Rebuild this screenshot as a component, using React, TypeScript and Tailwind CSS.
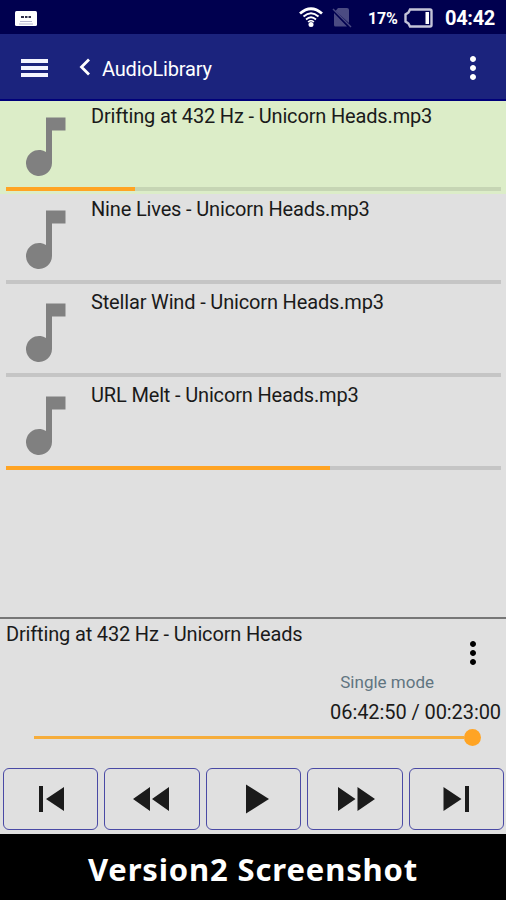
import { MdMoreVert } from "react-icons/md";

const tracks = [
    { name: "Drifting at 432 Hz - Unicorn Heads.mp3", progress: 26, active: true },
    { name: "Nine Lives - Unicorn Heads.mp3", progress: 0, active: false },
    { name: "Stellar Wind - Unicorn Heads.mp3", progress: 0, active: false },
    { name: "URL Melt - Unicorn Heads.mp3", progress: 65.4, active: false },
];

const controls = [
    { name: "Previous", path: "M36 18h4v26h-4zM61 19v24L43 31z" },
    { name: "Rewind", path: "M46 19v24L29 31zM65 19v24L48 31z" },
    { name: "Play", path: "M40 16.500v29L63 31z" },
    { name: "Fast forward", path: "M31 19v24L48.500 31zM50.500 19v24L68 31z" },
    { name: "Next", path: "M35.500 19v24L53.500 31zM57 18h4v26h-4z" },
];

function StatusBar() {
    return (
        <div className="h-[34px] shrink-0 bg-[#00004f] flex items-center text-white">
            <svg className="ml-[15px] mt-[2px] w-[22px] h-[15px]" viewBox="0 0 22 15">
                <rect width="22" height="15" rx="1.500" fill="#fff" />
                <path d="M6 5h3v2H6zM10 5h2.500v2H10zM13.500 5h2.500v2h-2.500z" fill="#30304a" />
                <path d="M5 10.500h12M4 13h14" stroke="#b8b8d0" strokeWidth="1" />
            </svg>
            <svg className="ml-[262px] w-[24px] h-[22px]" viewBox="0 0 24 22" fill="none" stroke="#fff">
                <path d="M1 7.500Q12-2 23 7.500" strokeWidth="2.800" />
                <path d="M4.500 10.500Q12 4 19.500 10.500" strokeWidth="2" />
                <path d="M7 13.500Q12 9 17 13.500" strokeWidth="1.800" />
                <path d="M9 16Q12 13.500 15 16" strokeWidth="1.500" />
                <circle cx="12" cy="18.500" r="2.500" fill="#fff" stroke="none" />
            </svg>
            <svg className="ml-[9px] mt-[2px] w-[21px] h-[20px]" viewBox="0 0 21 20">
                <path d="M6 0h9q2 0 2 2v13L3.500 3zM2 5l13 13.500H3.500Q2 18.500 2 17z" fill="#4b4b82" />
                <path d="M1 1l18 18" stroke="#4b4b82" strokeWidth="1.500" />
            </svg>
            <span className="ml-[15px] w-[32px] text-[16px] leading-none font-bold tracking-[-0.2px] pt-[3px]">17%</span>
            <svg className="ml-[4px] mt-px w-[29px] h-[20px]" viewBox="0 0 29 20">
                <path d="M6 1.500h20q1.500 0 1.500 1.500v14q0 1.500-1.500 1.500H6L4.500 15.500 1.500 13.500V6.500L4.500 4.500z" fill="none" stroke="#c4c4d8" strokeWidth="2.400" />
                <path d="M21.500 4h3.500v12h-3.500z" fill="#fff" />
            </svg>
            <span className="ml-[12px] text-[20px] leading-none font-bold tracking-[-0.3px] pt-[2px]">04:42</span>
        </div>
    );
}

function Header() {
    return (
        <header className="h-[67px] shrink-0 bg-[#1b237d] border-b-2 border-[#00007a] flex items-center text-white">
            <button aria-label="Menu" className="ml-[21px] mt-[3px] w-[27px] flex flex-col gap-[3px]">
                <span className="h-[4px] bg-[#f4f4ff]" />
                <span className="h-[4px] bg-[#f4f4ff]" />
                <span className="h-[4px] bg-[#f4f4ff]" />
            </button>
            <svg className="ml-[31px] mt-px w-[12px] h-[18px]" viewBox="0 0 12 18">
                <path d="M10 1.500L2.500 9l7.500 7.500" fill="none" stroke="#fff" strokeWidth="2.800" />
            </svg>
            <h1 className="ml-[11px] mt-[4px] text-[20px] leading-6 tracking-[-0.2px]">AudioLibrary</h1>
            <MdMoreVert className="ml-auto mr-[15px] mt-[2px] w-[36px] h-[36px]" />
        </header>
    );
}

function TrackRow({ name, progress, active }: (typeof tracks)[number]) {
    return (
        <li className={active ? "h-[93px] bg-[#dcedc8] flex flex-col" : "h-[93px] flex flex-col"}>
            <div className="flex h-[86px]">
                <svg className="ml-[26px] mt-[16px] w-[40px] h-[60px]" viewBox="0 0 40 60" fill="#808080">
                    <path d="M20 .5h19.500v13H26v32.500A13 13 0 1 1 20 35z" />
                </svg>
                <span className="ml-[25px] mt-[3px] text-[20px] leading-6 tracking-[-0.16px] whitespace-nowrap text-[#1a1a1a]">{name}</span>
            </div>
            <div className={active ? "ml-[6px] mr-[5px] h-[4px] bg-[#c6d5b4]" : "ml-[6px] mr-[5px] h-[4px] bg-[#c5c5c5]"}>
                <div className="h-full bg-[#ffa424]" style={{ width: `${progress}%` }} />
            </div>
        </li>
    );
}

function Player() {
    return (
        <section className="h-[217px] shrink-0 border-t-2 border-[#777777] text-[#1a1a1a] flex flex-col">
            <div className="flex h-[50px]">
                <span className="ml-[6px] mt-[3px] text-[20px] leading-6 tracking-[-0.16px]">Drifting at 432 Hz - Unicorn Heads</span>
                <MdMoreVert className="ml-auto mr-[15px] mt-[16px] w-[36px] h-[36px] text-black" />
            </div>
            <div className="mt-[3px] pr-[72px] text-right text-[17px] leading-5 text-[#607580]">Single mode</div>
            <div className="mt-[8px] pr-[5px] text-right text-[20px] leading-6 tracking-[-0.08px]">06:42:50 / 00:23:00</div>
            <div className="ml-[34px] mr-[25px] mt-[5px] h-[17px] flex items-center">
                <div className="flex-1 h-[3px] bg-[#f6ad3b]" />
                <div className="w-[17px] h-[17px] rounded-full bg-[#ffa424]" />
            </div>
            <div className="mt-[22px] pl-[3px] pr-[2px] grid grid-cols-5 gap-[6px]">
                {controls.map((item) => (
                    <button
                        key={item.name}
                        aria-label={item.name}
                        className="min-w-0 h-[62px] rounded-[6px] border-[1.5px] border-[#4a4aa5] flex items-center justify-center"
                    >
                        <svg className="w-[96px] h-[62px] shrink-0" viewBox="0 0 96 62" fill="#1b1b1b">
                            <path d={item.path} />
                        </svg>
                    </button>
                ))}
            </div>
        </section>
    );
}

export default function App() {
    return (
        <div className="w-[506px] h-[900px] overflow-hidden bg-[#e0e0e0] font-['Roboto',sans-serif] flex flex-col">
            <StatusBar />
            <Header />
            <ul className="flex-1 min-h-0">
                {tracks.map((track) => (
                    <TrackRow key={track.name} {...track} />
                ))}
            </ul>
            <Player />
            <footer className="h-[66px] shrink-0 pt-[5px] bg-black text-white flex items-center justify-center font-['Noto_Sans','Open_Sans',sans-serif] font-bold text-[31px] leading-none tracking-[0.85px]">
                Version2 Screenshot
            </footer>
        </div>
    );
}
